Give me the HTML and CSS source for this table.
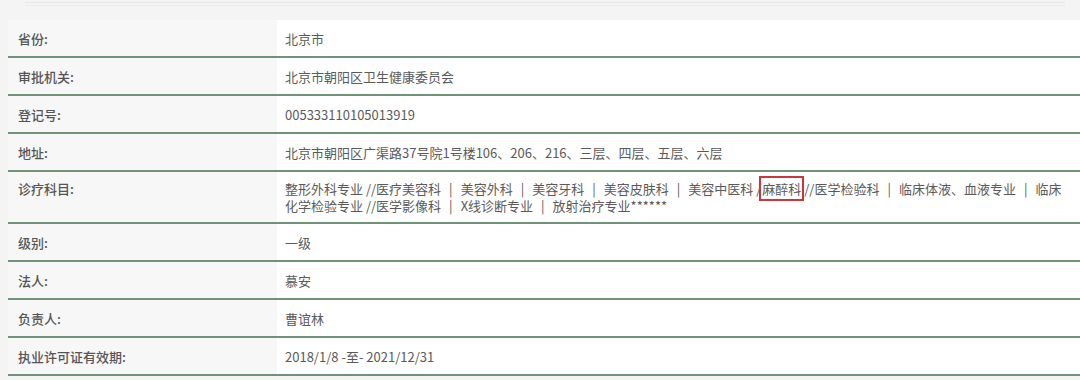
FILE: index.html
```html
<!DOCTYPE html>
<html lang="zh-CN">
<head>
<meta charset="utf-8">
<link rel="stylesheet" href="styles.css">
</head>
<body>
<div class="page">
  <div class="top"><div class="topline"></div></div>
  <table class="info">
    <tr><th>省份:</th><td>北京市</td></tr>
    <tr><th>审批机关:</th><td>北京市朝阳区卫生健康委员会</td></tr>
    <tr><th>登记号:</th><td>005333110105013919</td></tr>
    <tr><th>地址:</th><td>北京市朝阳区广渠路37号院1号楼106、206、216、三层、四层、五层、六层</td></tr>
    <tr class="multi"><th>诊疗科目:</th><td><div class="line">整形外科专业 //医疗美容科<span class="sep">|</span>美容外科<span class="sep">|</span>美容牙科<span class="sep">|</span>美容皮肤科<span class="sep">|</span>美容中医科 /<span class="mark">麻醉科</span>//医学检验科<span class="sep">|</span>临床体液、血液专业<span class="sep">|</span>临床</div><div class="line">化学检验专业 //医学影像科<span class="sep">|</span>X线诊断专业<span class="sep">|</span>放射治疗专业******</div></td></tr>
    <tr><th>级别:</th><td>一级</td></tr>
    <tr><th>法人:</th><td>慕安</td></tr>
    <tr><th>负责人:</th><td>曹谊林</td></tr>
    <tr><th>执业许可证有效期:</th><td>2018/1/8 -至- 2021/12/31</td></tr>
  </table>
</div>
</body>
</html>
```

FILE: styles.css
```css
html, body {
  margin: 0;
  padding: 0;
  background: #f4f4f4;
}
.page {
  width: 1080px;
  height: 380px;
  overflow: hidden;
  font-family: "Noto Sans CJK SC", "Noto Sans", sans-serif;
  font-size: 13px;
  color: #5a5a5a;
}
.top {
  height: 20px;
  padding: 2px 15px 0 25px;
  box-sizing: border-box;
}
.topline {
  height: 2px;
  border-top: 1px solid #e6e6e6;
  border-bottom: 1px solid #ececec;
}
.info {
  border-collapse: collapse;
  width: 1072px;
  margin-left: 8px;
  background: #fff;
}
.info th, .info td {
  height: 36px;
  padding: 0;
  border-bottom: 2px solid #6f9379;
  vertical-align: middle;
  line-height: 17px;
}
.info th {
  width: 259px;
  padding-left: 10px;
  text-align: left;
  font-weight: 500;
  color: #555;
  background: #f7f7f7;
}
.info td {
  padding-left: 8px;
  padding-right: 4px;
}
.info tr.multi th, .info tr.multi td {
  height: auto;
  vertical-align: top;
  padding-top: 8px;
  padding-bottom: 8px;
}
.line {
  white-space: nowrap;
}
.sep {
  margin: 0 8px;
}
.mark {
  outline: 2px solid #c8373c;
  outline-offset: 1px;
  margin: 0 3px 0 1px;
}
```
